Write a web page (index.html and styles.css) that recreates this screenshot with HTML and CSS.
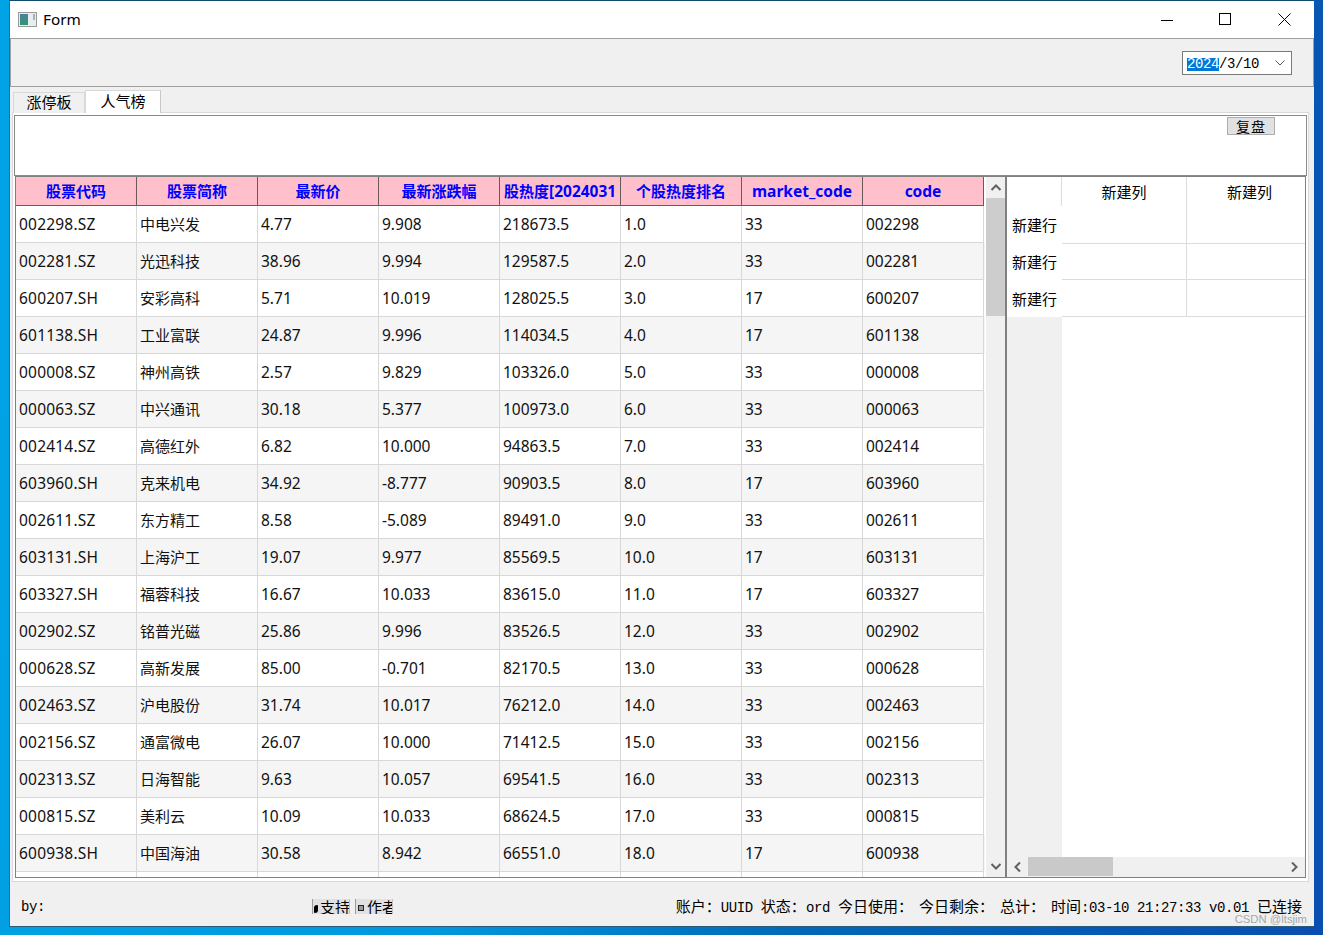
FILE: index.html
```html
<!DOCTYPE html>
<html lang="zh">
<head>
<meta charset="utf-8">
<title>Form</title>
<link rel="stylesheet" href="styles.css">
</head>
<body>
<div class="window">
  <header class="titlebar">
    <svg class="appicon" width="20" height="16" viewBox="0 0 20 16"><defs><linearGradient id="g" x1="0" y1="0" x2="0" y2="1"><stop offset="0" stop-color="#4a7f9a"/><stop offset="1" stop-color="#2f9a70"/></linearGradient></defs><rect x=".5" y=".5" width="18" height="14" fill="#e8eef0" stroke="#9a9a9a"/><rect x="2" y="2" width="8" height="11" fill="url(#g)"/><rect x="15" y="2" width="2" height="6" fill="#9fb4bb"/></svg>
    <span class="title">Form</span>
    <div class="winbtns">
      <svg width="12" height="12" viewBox="0 0 12 12" class="wb-min"><path d="M0 6.500H12" stroke="#000"/></svg>
      <svg width="13" height="13" viewBox="0 0 13 13" class="wb-max"><rect x=".5" y=".5" width="11" height="11" fill="none" stroke="#000"/></svg>
      <svg width="13" height="13" viewBox="0 0 13 13" class="wb-close"><path d="M.5.5L12.500 12.500M12.500.5L.5 12.500" stroke="#000"/></svg>
    </div>
  </header>
  <section class="toppanel">
    <div class="datebox"><span class="sel">2024</span>/3/10
      <svg class="datechev" width="10" height="6" viewBox="0 0 10 6"><path d="M.5.5L5 5L9.500.5" fill="none" stroke="#555"/></svg>
    </div>
  </section>
  <nav class="tabs">
    <div class="tab">涨停板</div>
    <div class="tab active">人气榜</div>
  </nav>
  <main class="pane">
    <div class="ctrl"><button class="replay">复盘</button></div>
    <div class="tables">
      <div class="frame left">
        <div class="grid">
          <div class="hrow"><div>股票代码</div><div>股票简称</div><div>最新价</div><div>最新涨跌幅</div><div class="clip">股热度<span class="lt">[2024031</span></div><div>个股热度排名</div><div><span class="lt">market_code</span></div><div><span class="lt">code</span></div></div>
          <div class="row"><div>002298.SZ</div><div class="cn">中电兴发</div><div>4.77</div><div>9.908</div><div>218673.5</div><div>1.0</div><div>33</div><div>002298</div></div>
          <div class="row"><div>002281.SZ</div><div class="cn">光迅科技</div><div>38.96</div><div>9.994</div><div>129587.5</div><div>2.0</div><div>33</div><div>002281</div></div>
          <div class="row"><div>600207.SH</div><div class="cn">安彩高科</div><div>5.71</div><div>10.019</div><div>128025.5</div><div>3.0</div><div>17</div><div>600207</div></div>
          <div class="row"><div>601138.SH</div><div class="cn">工业富联</div><div>24.87</div><div>9.996</div><div>114034.5</div><div>4.0</div><div>17</div><div>601138</div></div>
          <div class="row"><div>000008.SZ</div><div class="cn">神州高铁</div><div>2.57</div><div>9.829</div><div>103326.0</div><div>5.0</div><div>33</div><div>000008</div></div>
          <div class="row"><div>000063.SZ</div><div class="cn">中兴通讯</div><div>30.18</div><div>5.377</div><div>100973.0</div><div>6.0</div><div>33</div><div>000063</div></div>
          <div class="row"><div>002414.SZ</div><div class="cn">高德红外</div><div>6.82</div><div>10.000</div><div>94863.5</div><div>7.0</div><div>33</div><div>002414</div></div>
          <div class="row"><div>603960.SH</div><div class="cn">克来机电</div><div>34.92</div><div>-8.777</div><div>90903.5</div><div>8.0</div><div>17</div><div>603960</div></div>
          <div class="row"><div>002611.SZ</div><div class="cn">东方精工</div><div>8.58</div><div>-5.089</div><div>89491.0</div><div>9.0</div><div>33</div><div>002611</div></div>
          <div class="row"><div>603131.SH</div><div class="cn">上海沪工</div><div>19.07</div><div>9.977</div><div>85569.5</div><div>10.0</div><div>17</div><div>603131</div></div>
          <div class="row"><div>603327.SH</div><div class="cn">福蓉科技</div><div>16.67</div><div>10.033</div><div>83615.0</div><div>11.0</div><div>17</div><div>603327</div></div>
          <div class="row"><div>002902.SZ</div><div class="cn">铭普光磁</div><div>25.86</div><div>9.996</div><div>83526.5</div><div>12.0</div><div>33</div><div>002902</div></div>
          <div class="row"><div>000628.SZ</div><div class="cn">高新发展</div><div>85.00</div><div>-0.701</div><div>82170.5</div><div>13.0</div><div>33</div><div>000628</div></div>
          <div class="row"><div>002463.SZ</div><div class="cn">沪电股份</div><div>31.74</div><div>10.017</div><div>76212.0</div><div>14.0</div><div>33</div><div>002463</div></div>
          <div class="row"><div>002156.SZ</div><div class="cn">通富微电</div><div>26.07</div><div>10.000</div><div>71412.5</div><div>15.0</div><div>33</div><div>002156</div></div>
          <div class="row"><div>002313.SZ</div><div class="cn">日海智能</div><div>9.63</div><div>10.057</div><div>69541.5</div><div>16.0</div><div>33</div><div>002313</div></div>
          <div class="row"><div>000815.SZ</div><div class="cn">美利云</div><div>10.09</div><div>10.033</div><div>68624.5</div><div>17.0</div><div>33</div><div>000815</div></div>
          <div class="row"><div>600938.SH</div><div class="cn">中国海油</div><div>30.58</div><div>8.942</div><div>66551.0</div><div>18.0</div><div>17</div><div>600938</div></div>
          <div class="row"><div></div><div></div><div></div><div></div><div></div><div></div><div></div><div></div></div>
        </div>
        <div class="vscroll">
          <svg width="20" height="21" viewBox="0 0 20 21"><path d="M5.500 13L10 8.500L14.500 13" fill="none" stroke="#606060" stroke-width="2"/></svg>
          <div class="vtrack"><div class="vthumb"></div></div>
          <svg width="20" height="21" viewBox="0 0 20 21"><path d="M5.500 8L10 12.500L14.500 8" fill="none" stroke="#606060" stroke-width="2"/></svg>
        </div>
      </div>
      <div class="frame right">
        <div class="rbody">
          <div class="rhead"><div class="vh"></div><div class="ch">新建列</div><div class="ch last">新建列</div></div>
          <div class="rrow"><div class="vh">新建行</div><div class="c"></div><div class="c last"></div></div>
          <div class="rrow"><div class="vh">新建行</div><div class="c"></div><div class="c last"></div></div>
          <div class="rrow"><div class="vh">新建行</div><div class="c"></div><div class="c last"></div></div>
          <div class="rfill"></div>
        </div>
        <div class="hscroll">
          <svg width="21" height="20" viewBox="0 0 21 20"><path d="M13 5.500L8.500 10L13 14.500" fill="none" stroke="#606060" stroke-width="2"/></svg>
          <div class="htrack"><div class="hthumb"></div></div>
          <svg width="21" height="20" viewBox="0 0 21 20"><path d="M8 5.500L12.500 10L8 14.500" fill="none" stroke="#606060" stroke-width="2"/></svg>
        </div>
      </div>
    </div>
  </main>
  <footer class="status">
    <span class="by lat">by:</span>
    <div class="minibtns">
      <div class="mini"><i class="mk-a"></i>支持</div>
      <div class="mini"><i class="mk-b"></i>作者</div>
    </div>
    <div class="info">账户：<span class="lat">UUID </span>状态：<span class="lat">ord </span>今日使用：<i class="gap"></i>今日剩余：<i class="gap"></i>总计：<i class="gap"></i>时间<span class="lat">:03-10 21:27:33 v0.01 </span>已连接</div>
  </footer>
  <div class="mark">CSDN @ltsjim</div>
</div>
</body>
</html>
```
FILE: styles.css
```css
* { box-sizing: border-box; }
html, body { margin: 0; height: 100%; }
body {
  width: 1323px;
  height: 935px;
  overflow: hidden;
  padding: 1px 0 0 9px;
  background: linear-gradient(100deg, #00a4e6 0%, #0098de 40%, #0068b8 65%, #0a4eb0 100%);
  font-family: "Noto Sans", "Noto Sans CJK SC", sans-serif;
  color: #000;
}
.window {
  position: relative;
  width: 1305px;
  height: 925px;
  background: #f0f0f0;
  border-left: 1px solid #3c6a80;
  box-shadow: 0 -1px 0 #124a70, 0 1px 0 #2a5a78;
  display: flex;
  flex-direction: column;
}
.titlebar {
  height: 37px;
  flex: none;
  background: #fff;
  display: flex;
  align-items: center;
  padding-left: 8px;
}
.appicon { margin-right: 5px; }
.title { font-size: 15.3px; font-family: "Noto Sans", sans-serif; margin-bottom: 2px; }
.winbtns { margin-left: auto; display: flex; align-items: center; }
.wb-min { margin-right: 46px; }
.wb-max { margin-right: 46px; }
.wb-close { margin-right: 23px; }

.toppanel {
  height: 49px;
  flex: none;
  border: 1px solid #a0a0a0;
  display: flex;
  justify-content: flex-end;
  align-items: flex-start;
  padding: 12px 21px 0 0;
}
.datebox {
  width: 110px;
  height: 24px;
  background: #fff;
  border: 1px solid #7a7a7a;
  font: 14px/13px "Liberation Mono", "Noto Sans CJK SC", monospace;
  letter-spacing: -.4px;
  padding: 6px 0 0 4px;
  position: relative;
  white-space: nowrap;
}
.sel { background: #0078d7; color: #fff; display: inline-block; width: 32px; }
.datechev { position: absolute; right: 6px; top: 8px; }

.tabs { display: flex; align-items: flex-end; height: 26px; margin-bottom: -1px; padding-left: 3px; flex: none; position: relative; z-index: 1; }
.tab {
  width: 72px;
  height: 21px;
  border: 1px solid #d9d9d9;
  border-bottom: none;
  background: #f0f0f0;
  font: 15px/18px "Noto Sans CJK SC", sans-serif;
  text-align: center;
}
.tab.active { width: 76px; height: 23px; background: #fff; line-height: 20px; border-right-color: #c8c8c8; }

.pane {
  height: 770px;
  flex: none;
  margin: 0 4px 0 2px;
  width: 1297px;
  border: 1px solid #d9d9d9;
  background: #fff;
  padding: 2px 1px 0 1px;
  display: flex;
  flex-direction: column;
  position: relative;
}
.ctrl {
  height: 61px;
  flex: none;
  border: 1px solid #8a8a8a;
  display: flex;
  justify-content: flex-end;
  align-items: flex-start;
  padding: 1px 31px 0 0;
}
.replay {
  width: 48px;
  height: 18px;
  background: #e1e1e1;
  border: 1px solid #adadad;
  font: 14px/13px "Noto Sans CJK SC", sans-serif;
  padding: 0;
  letter-spacing: 1px;
}
.tables { display: flex; height: 702px; padding-left: 1px; flex: none; }
.frame { border: 1px solid #808080; height: 702px; overflow: hidden; background: #fff; }
.frame.left { width: 992px; display: flex; border-right: 2px solid #808080; }
.frame.right { width: 299px; border-left: none; display: flex; flex-direction: column; }

.grid { width: 969px; overflow: hidden; flex: none; }
.hrow, .row { display: grid; grid-template-columns: repeat(8, 121px); }
.hrow { height: 29px; }
.hrow > div {
  background: #ffc0cb;
  border-right: 1px solid #6b5a5c;
  border-bottom: 1px solid #6b5a5c;
  color: #0000ff;
  font: bold 15px/29px "Noto Sans", "Noto Sans CJK SC", sans-serif;
  text-align: center;
  white-space: nowrap;
  overflow: hidden;
}
.hrow .lt { font-size: 15.5px; }
.hrow > .clip { text-align: left; padding-left: 4px; }
.row { height: 37px; }
.row:nth-child(odd) { background: #f5f5f5; }
.row > div {
  border-right: 1px solid #d8d8d8;
  border-bottom: 1px solid #d8d8d8;
  font-size: 15.5px;
  line-height: 36px;
  padding-left: 3px;
  white-space: nowrap;
  overflow: hidden;
  color: #111;
}
.row > div:first-child { letter-spacing: .2px; }
.row > .cn { font-family: "Noto Sans CJK SC", sans-serif; font-size: 15px; }

.vscroll { width: 20px; background: #f0f0f0; display: flex; flex-direction: column; flex: none; border-left: 1px solid #fff; }
.vscroll svg { flex: none; display: block; }
.vtrack { flex: 1; }
.vthumb { height: 118px; background: #cdcdcd; }

.rbody { flex: 1; display: flex; flex-direction: column; min-height: 0; overflow: hidden; }
.rhead, .rrow { display: grid; grid-template-columns: 55px 125px 125px; flex: none; }
.rhead { height: 29px; }
.rrow { height: 37px; }
.vh { font: 15px/37px "Noto Sans CJK SC", sans-serif; text-align: center; background: #fff; white-space: nowrap; }
.rrow:nth-child(2) .vh { line-height: 38px; }
.ch { font: 15px/29px "Noto Sans CJK SC", sans-serif; text-align: center; border-right: 1px solid #dcdcdc; border-left: 1px solid #dcdcdc; margin-left: -1px; }
.ch.last { border-right: none; }
.c { border-bottom: 1px solid #dcdcdc; border-right: 1px solid #dcdcdc; }
.c.last { border-right: none; }
.rfill { flex: 1; width: 55px; background: #f0f0f0; }
.rrow .c:first-of-type { border-left: 1px solid #dcdcdc; }

.hscroll { height: 20px; flex: none; display: flex; background: #f0f0f0; }
.hscroll svg { flex: none; display: block; }
.htrack { flex: 1; }
.hthumb { width: 85px; height: 19px; background: #c9c9c9; }

.status {
  flex: 1;
  display: flex;
  align-items: flex-start;
  padding-top: 17px;
  position: relative;
  font: 15px/18px "Noto Sans CJK SC", sans-serif;
}
.lat { font: 14px/18px "Liberation Mono", monospace; letter-spacing: -.4px; white-space: pre; }
.by { margin-left: 11px; margin-top: -1px; }
.minibtns { display: flex; gap: 5px; margin-left: 267px; }
.mini {
  width: 38px;
  height: 15px;
  overflow: hidden;
  background: #e1e1e1;
  border-left: 1px solid #9a9a9a;
  border-right: 1px solid #c0c0c0;
  font: 15px/16px "Noto Sans CJK SC", sans-serif;
  white-space: nowrap;
  display: flex;
  align-items: flex-start;
}
.mini i { display: block; flex: none; }
.mk-a { width: 4px; height: 8px; background: #000; margin: 6px 2px 0 1px; border-radius: 3px 1px 3px 1px; }
.mk-b { width: 6px; height: 6px; border: 1px solid #222; background: #999; margin: 6px 3px 0 2px; }
.info { margin-left: auto; margin-top: -2px; padding-right: 12px; white-space: nowrap; }
.gap { display: inline-block; width: 6px; }
.mark {
  position: absolute;
  right: 7px;
  bottom: 0;
  font: 11.3px/14px "Liberation Sans", sans-serif;
  color: #a8a8a8;
}
```
